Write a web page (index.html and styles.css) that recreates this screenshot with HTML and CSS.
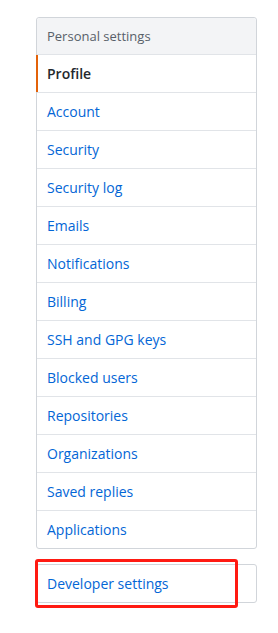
FILE: index.html
```html
<!DOCTYPE html>
<html lang="en">
  <head>
    <meta charset="UTF-8" />
    <meta name="viewport" content="width=device-width, initial-scale=1.0" />
    <title>Settings</title>
    <link rel="stylesheet" href="styles.css">
  </head>
  <body>
    <div class="sidebar">
      <!-- personal settings menu -->
      <nav class="menu">
        <div class="menu-heading">Personal settings</div>
        <a class="menu-item selected" href="#">Profile</a>
        <a class="menu-item" href="#">Account</a>
        <a class="menu-item" href="#">Security</a>
        <a class="menu-item" href="#">Security log</a>
        <a class="menu-item" href="#">Emails</a>
        <a class="menu-item" href="#">Notifications</a>
        <a class="menu-item" href="#">Billing</a>
        <a class="menu-item" href="#">SSH and GPG keys</a>
        <a class="menu-item" href="#">Blocked users</a>
        <a class="menu-item" href="#">Repositories</a>
        <a class="menu-item" href="#">Organizations</a>
        <a class="menu-item" href="#">Saved replies</a>
        <a class="menu-item" href="#">Applications</a>
      </nav>

      <!-- developer settings, with the red highlight -->
      <div class="dev-wrap">
        <nav class="menu">
          <a class="menu-item" href="#">Developer settings</a>
        </nav>
        <div class="highlight"></div>
      </div>
    </div>
  </body>
</html>
```

FILE: styles.css
```css
* {
  box-sizing: border-box;
}

body {
  margin: 0;
  background: #fff;
  font-family: "Open Sans", "Noto Sans", Arial, sans-serif;
  font-size: 14px;
}

.sidebar {
  width: 257px;
  padding: 17px 0 31px 36px;
}

.menu {
  display: flex;
  flex-direction: column;
  border: 1px solid #d1d5da;
  border-radius: 3px;
  background: #fff;
}

.menu-heading {
  height: 37px;
  line-height: 36px;
  padding: 0 10px;
  background: #f3f4f6;
  border-bottom: 1px solid #e1e4e8;
  color: #586069;
  font-size: 13px;
  border-radius: 3px 3px 0 0;
}

.menu-item {
  display: block;
  height: 38px;
  line-height: 37px;
  padding: 0 10px;
  border-bottom: 1px solid #e1e4e8;
  color: #0366d6;
  text-decoration: none;
  position: relative;
}

.menu-item:last-child {
  border-bottom: none;
  height: 37px;
}

.menu-item.selected {
  color: #24292e;
  font-weight: 600;
}

.menu-item.selected::before {
  content: "";
  position: absolute;
  left: -1px;
  top: 0;
  bottom: 0;
  width: 2px;
  background: #e36209;
}

.dev-wrap {
  position: relative;
  margin-top: 15px;
}

.highlight {
  position: absolute;
  left: -1px;
  top: -5px;
  width: 203px;
  height: 49px;
  border: 3px solid #ff1a12;
  border-radius: 3px;
}
```
